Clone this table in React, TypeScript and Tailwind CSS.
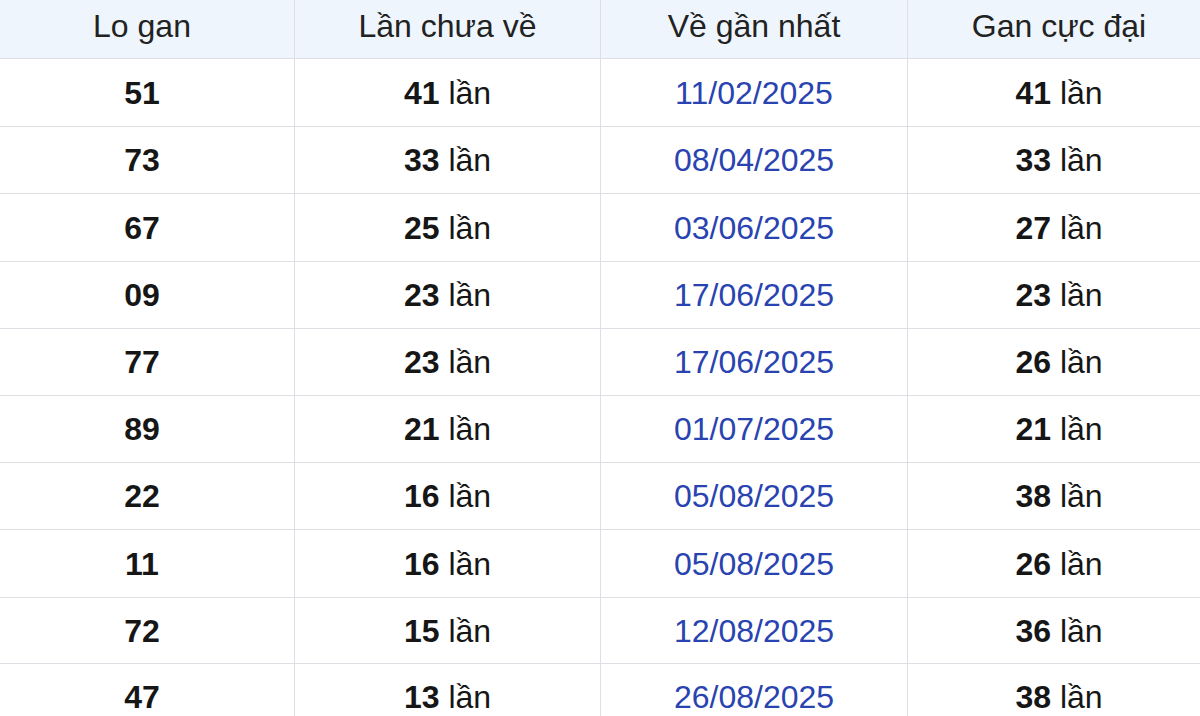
import React from "react";

const rows: [string, string, string, string][] = [
  ["51", "41", "11/02/2025", "41"],
  ["73", "33", "08/04/2025", "33"],
  ["67", "25", "03/06/2025", "27"],
  ["09", "23", "17/06/2025", "23"],
  ["77", "23", "17/06/2025", "26"],
  ["89", "21", "01/07/2025", "21"],
  ["22", "16", "05/08/2025", "38"],
  ["11", "16", "05/08/2025", "26"],
  ["72", "15", "12/08/2025", "36"],
  ["47", "13", "26/08/2025", "38"],
];

const heights = [
  "h-[68px]",
  "h-[67px]",
  "h-[68px]",
  "h-[67px]",
  "h-[67px]",
  "h-[67px]",
  "h-[67px]",
  "h-[68px]",
  "h-[66px]",
  "h-[67px]",
];

const cols = "grid grid-cols-[305px_306px_307px_302px]";

export default function App() {
  return (
    <div
      className="w-[1200px] h-[716px] overflow-hidden bg-white text-[32px] text-[#161616]"
      style={{ fontFamily: '"Liberation Sans", Arial, sans-serif' }}
    >
      <div className="w-[1220px] ml-[-10px]">
        <div className={`${cols} h-[59px] bg-[#eef5fc] border-b border-[#dcdfe4] text-[#222]`}>
          {["Lo gan", "Lần chưa về", "Về gần nhất", "Gan cực đại"].map((h, i) => (
            <div
              key={h}
              className={`flex items-center justify-center pb-[6px] ${i < 3 ? "border-r border-[#dcdfe4]" : ""}`}
            >
              {h}
            </div>
          ))}
        </div>
        {rows.map((r, idx) => (
          <div key={idx} className={`${cols} ${heights[idx]} border-b border-[#dcdfe4]`}>
            <div className="flex items-center justify-center border-r border-[#dcdfe4] font-bold">
              {r[0]}
            </div>
            <div className="flex items-center justify-center border-r border-[#dcdfe4]">
              <span className="font-bold">{r[1]}</span>
              <span>&nbsp;lần</span>
            </div>
            <div className="flex items-center justify-center border-r border-[#dcdfe4] text-[#2943b0]">
              {r[2]}
            </div>
            <div className="flex items-center justify-center">
              <span className="font-bold">{r[3]}</span>
              <span>&nbsp;lần</span>
            </div>
          </div>
        ))}
      </div>
    </div>
  );
}
